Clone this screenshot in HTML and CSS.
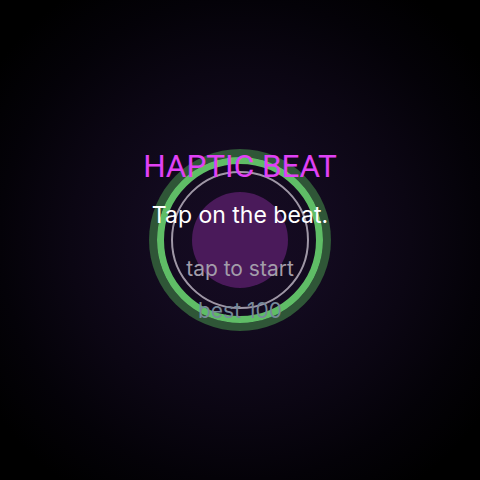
FILE: index.html
```html
<!DOCTYPE html>
<html lang="en">
<head>
<meta charset="utf-8">
<title>Haptic Beat</title>
<link rel="stylesheet" href="styles.css">
</head>
<body>
<main class="screen">
  <div class="stage">
    <div class="rings">
      <div class="beat-ring">
        <div class="guide-ring">
          <div class="core"></div>
        </div>
      </div>
    </div>
    <div class="texts">
      <h1 class="title">HAPTIC BEAT</h1>
      <p class="subtitle">Tap on the beat.</p>
      <p class="hint">tap to start</p>
      <p class="best">best 100</p>
    </div>
  </div>
</main>
</body>
</html>
```

FILE: styles.css
```css
* { box-sizing: border-box; }
html, body {
  margin: 0;
  padding: 0;
  width: 480px;
  height: 480px;
  background: #000;
  overflow: hidden;
}
.screen {
  width: 480px;
  height: 480px;
  background: radial-gradient(circle at 240px 240px, #160b23 0px, #120a1e 90px, #0b0613 170px, #040208 240px, #000 300px);
}
.stage {
  display: grid;
  width: 480px;
  height: 480px;
}
.rings, .texts {
  grid-area: 1 / 1;
}
.rings {
  display: flex;
  align-items: center;
  justify-content: center;
}
.beat-ring {
  width: 166px;
  height: 166px;
  border-radius: 50%;
  border: 7px solid #5fbd66;
  box-shadow: 0 0 0 8px #2f5637;
  display: flex;
  align-items: center;
  justify-content: center;
}
.guide-ring {
  width: 138px;
  height: 138px;
  border-radius: 50%;
  border: 2px solid #9f97a6;
  display: flex;
  align-items: center;
  justify-content: center;
}
.core {
  width: 96px;
  height: 96px;
  border-radius: 50%;
  background: #4a1a5a;
}
.texts {
  display: flex;
  flex-direction: column;
  align-items: center;
  padding-top: 149px;
  font-family: Inter, "Noto Sans", sans-serif;
}
.title {
  margin: 0;
  font-family: Roboto, "Liberation Sans", sans-serif;
  font-weight: 400;
  font-size: 31.5px;
  line-height: 36px;
  color: #e041f5;
}
.subtitle {
  margin: 17px 0 0;
  font-size: 23px;
  line-height: 26px;
  color: #ffffff;
}
.hint {
  margin: 29px 0 0;
  font-size: 21px;
  line-height: 24px;
  color: #a39daa;
}
.best {
  margin: 18px 0 0;
  font-size: 21px;
  line-height: 24px;
  color: #76899a;
}
```
